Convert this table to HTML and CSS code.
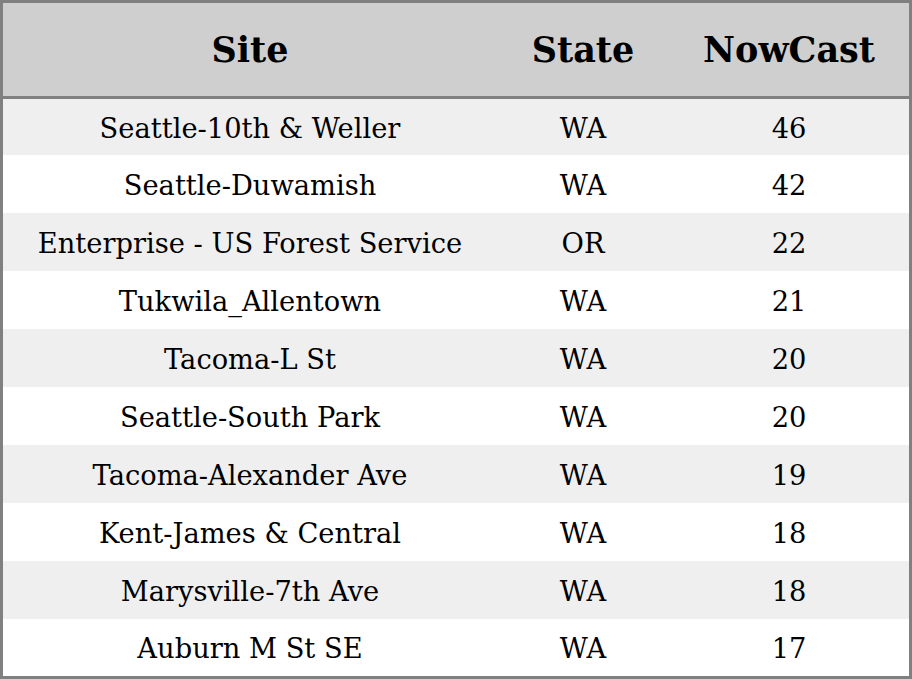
FILE: index.html
```html
<!DOCTYPE html>
<html>
<head>
<meta charset="utf-8">
<link rel="stylesheet" href="styles.css">
</head>
<body>
<table class="aq">
  <thead>
    <tr><th class="c-site">Site</th><th class="c-state">State</th><th class="c-now">NowCast</th></tr>
  </thead>
  <tbody>
    <tr><td>Seattle-10th &amp; Weller</td><td>WA</td><td>46</td></tr>
    <tr><td>Seattle-Duwamish</td><td>WA</td><td>42</td></tr>
    <tr><td>Enterprise - US Forest Service</td><td>OR</td><td>22</td></tr>
    <tr><td>Tukwila_Allentown</td><td>WA</td><td>21</td></tr>
    <tr><td>Tacoma-L St</td><td>WA</td><td>20</td></tr>
    <tr><td>Seattle-South Park</td><td>WA</td><td>20</td></tr>
    <tr><td>Tacoma-Alexander Ave</td><td>WA</td><td>19</td></tr>
    <tr><td>Kent-James &amp; Central</td><td>WA</td><td>18</td></tr>
    <tr><td>Marysville-7th Ave</td><td>WA</td><td>18</td></tr>
    <tr><td>Auburn M St SE</td><td>WA</td><td>17</td></tr>
  </tbody>
</table>
</body>
</html>
```
FILE: styles.css
```css
html, body {
  margin: 0;
  padding: 0;
  background: #ffffff;
}
.aq {
  width: 912px;
  height: 679px;
  border-collapse: collapse;
  border: 3px solid #808080;
  font-family: "DejaVu Serif", serif;
  color: #000;
  table-layout: fixed;
}
.aq th {
  background: #cfcfcf;
  font-size: 35px;
  font-weight: bold;
  height: 93px;
  border-bottom: 3px solid #808080;
  padding: 0;
  text-align: center;
}
.c-site { width: 494px; }
.c-state { width: 172px; }
.c-now { width: 240px; }
.aq td {
  font-size: 27.3px;
  text-align: center;
  padding: 2px 0 0 0;
  height: 56px;
}
.aq tbody tr:first-child td {
  height: 54px;
}
.aq tbody tr:last-child td {
  height: 55px;
}
.aq tbody tr:nth-child(odd) td {
  background: #efefef;
}
```
